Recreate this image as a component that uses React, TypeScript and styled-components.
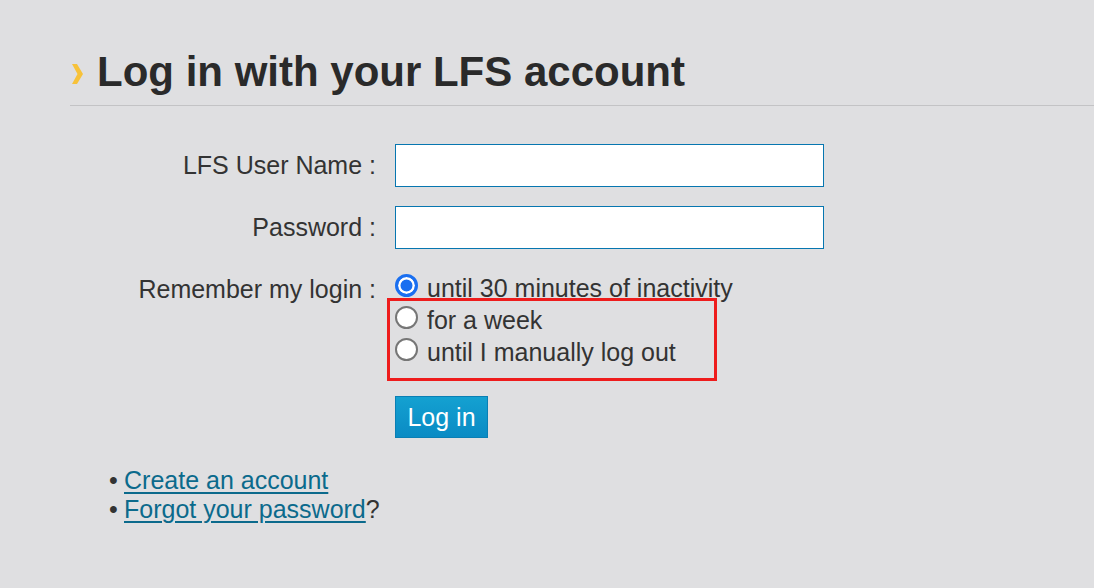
import React from "react";
import styled, { createGlobalStyle } from "styled-components";

const Global = createGlobalStyle`
  html, body { margin: 0; padding: 0; background: #dfdfe1; }
  body { font-family: "Liberation Sans", Arial, sans-serif; color: #333333; }
`;

const Page = styled.div`
  position: relative;
  width: 1094px;
  height: 588px;
  overflow: hidden;
  padding: 48px 0 0 70px;
  box-sizing: border-box;
`;

const Heading = styled.h1`
  margin: 0;
  display: flex;
  align-items: center;
  gap: 14px;
  padding: 0 0 9px 2px;
  border-bottom: 1px solid #c3c3c5;
  font-size: 42px;
  line-height: 48px;
  font-weight: bold;
  color: #2a2a2a;
`;

const Chevron = styled.svg`
  width: 11px;
  height: 20px;
  flex: none;
  margin-top: 3px;
`;

const Form = styled.form`
  display: grid;
  grid-template-columns: 306px 429px;
  column-gap: 19px;
  margin-top: 38px;
  font-size: 25px;
`;

const Label = styled.label<{ $top?: number }>`
  text-align: right;
  line-height: 43px;
  margin-top: ${(p) => p.$top ?? 0}px;
  white-space: nowrap;
`;

const TextInput = styled.input<{ $top?: number }>`
  box-sizing: border-box;
  width: 429px;
  height: 43px;
  margin: ${(p) => p.$top ?? 0}px 0 0 0;
  border: 1px solid #0776b0;
  border-radius: 0;
  background: #ffffff;
  font-size: 20px;
  font-family: inherit;
  outline: none;
`;

const RadioLabel = styled.div`
  text-align: right;
  line-height: 32px;
  margin-top: 24px;
`;

const RadioGroup = styled.div`
  display: flex;
  flex-direction: column;
  margin-top: 23px;
`;

const Option = styled.label`
  display: flex;
  align-items: flex-start;
  gap: 9px;
  line-height: 32px;
  white-space: nowrap;
`;

const Radio = styled.input`
  appearance: none;
  -webkit-appearance: none;
  box-sizing: border-box;
  width: 23px;
  height: 23px;
  margin: 2px 0 0 0;
  border-radius: 50%;
  border: 2px solid #767676;
  background: #ffffff;
  flex: none;

  &:checked {
    border: 3px solid #1a6ff0;
    background: #1a6ff0;
    box-shadow: inset 0 0 0 2.5px #ffffff;
  }
`;

const Spacer = styled.div``;

const Button = styled.button`
  justify-self: start;
  margin-top: 28px;
  width: 93px;
  height: 42px;
  border: 1px solid #0a7fb4;
  background: linear-gradient(#14a1d1, #0a8bc4);
  color: #ffffff;
  font-family: inherit;
  font-size: 25px;
  padding: 0;
`;

const Links = styled.ul`
  list-style: none;
  margin: 28px 0 0 39px;
  padding: 0;
  font-size: 25px;
  line-height: 29px;
`;

const LinkItem = styled.li`
  white-space: nowrap;
`;

const Bullet = styled.span`
  display: inline-block;
  width: 15px;
`;

const Link = styled.a`
  color: #0b6a8c;
  text-decoration: underline;
  text-underline-offset: 3px;
  text-decoration-thickness: 2px;
`;

const Highlight = styled.div`
  position: absolute;
  left: 387px;
  top: 298px;
  width: 330px;
  height: 83px;
  box-sizing: border-box;
  border: 3px solid #ee1c1c;
  pointer-events: none;
`;

export default function App() {
  return (
    <>
      <Global />
      <Page>
        <Heading>
          <Chevron viewBox="0 0 11 20">
            <polygon points="0,0 5,0 11,10 5,20 0,20 5.5,10" fill="#f7c23a" />
          </Chevron>
          Log in with your LFS account
        </Heading>
        <Form onSubmit={(e) => e.preventDefault()}>
          <Label htmlFor="user">LFS User Name :</Label>
          <TextInput id="user" type="text" />
          <Label htmlFor="pass" $top={19}>Password :</Label>
          <TextInput id="pass" type="password" $top={19} />
          <RadioLabel>Remember my login :</RadioLabel>
          <RadioGroup>
            <Option>
              <Radio type="radio" name="remember" defaultChecked />
              until 30 minutes of inactivity
            </Option>
            <Option>
              <Radio type="radio" name="remember" />
              for a week
            </Option>
            <Option>
              <Radio type="radio" name="remember" />
              until I manually log out
            </Option>
          </RadioGroup>
          <Spacer />
          <Button type="submit">Log in</Button>
        </Form>
        <Links>
          <LinkItem>
            <Bullet>•</Bullet>
            <Link href="#">Create an account</Link>
          </LinkItem>
          <LinkItem>
            <Bullet>•</Bullet>
            <Link href="#">Forgot your password</Link>?
          </LinkItem>
        </Links>
        <Highlight />
      </Page>
    </>
  );
}
